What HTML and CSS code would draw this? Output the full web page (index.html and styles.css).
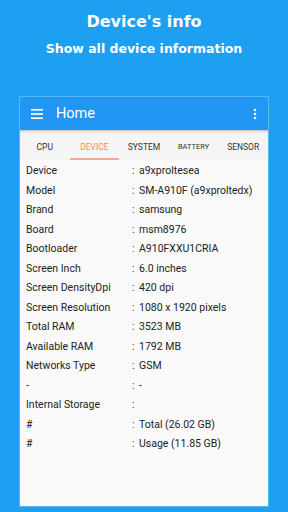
FILE: index.html
```html
<!DOCTYPE html>
<html lang="en">
<head>
    <meta charset="UTF-8">
    <title>Device's info</title>
    <link rel="stylesheet" href="styles.css">
</head>
<body>
    <div class="intro">
        <h1>Device's info</h1>
        <p>Show all device information</p>
    </div>

    <div class="phone">
        <div class="toolbar">
            <svg class="menu-icon" width="14" height="12" viewBox="0 0 14 12">
                <rect x="1" y="1" width="12" height="1.6" fill="#fff"/>
                <rect x="1" y="5.2" width="12" height="1.6" fill="#fff"/>
                <rect x="1" y="9.4" width="12" height="1.6" fill="#fff"/>
            </svg>
            <span class="toolbar-title">Home</span>
            <svg class="more-icon" width="4" height="12" viewBox="0 0 4 12">
                <circle cx="2" cy="2" r="1.3" fill="#fff"/>
                <circle cx="2" cy="6" r="1.3" fill="#fff"/>
                <circle cx="2" cy="10" r="1.3" fill="#fff"/>
            </svg>
        </div>

        <div class="tabs">
            <div class="tab">CPU</div>
            <div class="tab active">DEVICE</div>
            <div class="tab">SYSTEM</div>
            <div class="tab small">BATTERY</div>
            <div class="tab">SENSOR</div>
        </div>

        <div class="info">
            <div class="row"><span class="label">Device</span><span class="colon">:</span><span class="value">a9xproltesea</span></div>
            <div class="row"><span class="label">Model</span><span class="colon">:</span><span class="value">SM-A910F (a9xproltedx)</span></div>
            <div class="row"><span class="label">Brand</span><span class="colon">:</span><span class="value">samsung</span></div>
            <div class="row"><span class="label">Board</span><span class="colon">:</span><span class="value">msm8976</span></div>
            <div class="row"><span class="label">Bootloader</span><span class="colon">:</span><span class="value">A910FXXU1CRIA</span></div>
            <div class="row"><span class="label">Screen Inch</span><span class="colon">:</span><span class="value">6.0 inches</span></div>
            <div class="row"><span class="label">Screen DensityDpi</span><span class="colon">:</span><span class="value">420 dpi</span></div>
            <div class="row"><span class="label">Screen Resolution</span><span class="colon">:</span><span class="value">1080 x 1920 pixels</span></div>
            <div class="row"><span class="label">Total RAM</span><span class="colon">:</span><span class="value">3523 MB</span></div>
            <div class="row"><span class="label">Available RAM</span><span class="colon">:</span><span class="value">1792 MB</span></div>
            <div class="row"><span class="label">Networks Type</span><span class="colon">:</span><span class="value">GSM</span></div>
            <div class="row"><span class="label">-</span><span class="colon">:</span><span class="value">-</span></div>
            <div class="row"><span class="label">Internal Storage</span><span class="colon">:</span><span class="value"></span></div>
            <div class="row"><span class="label">#</span><span class="colon">:</span><span class="value">Total (26.02 GB)</span></div>
            <div class="row"><span class="label">#</span><span class="colon">:</span><span class="value">Usage (11.85 GB)</span></div>
        </div>
    </div>
</body>
</html>
```

FILE: styles.css
```css
html, body {
    height: 100%;
}

body {
    margin: 0;
    background-color: #1da0f1;
    font-family: 'DejaVu Sans', sans-serif;
    color: #fff;
    overflow: hidden;
}

.intro {
    text-align: center;
    padding-top: 11px;
}

.intro h1 {
    margin: 0;
    font-size: 16px;
    font-weight: bold;
    line-height: 22px;
}

.intro p {
    margin: 7px 0 0;
    font-size: 12.5px;
    font-weight: bold;
    line-height: 18px;
}

.phone {
    margin: 39px 20px 0;
    height: 409px;
    background-color: #fafafa;
    box-shadow: 0 0 0 1px rgba(255, 255, 255, 0.25);
    display: flex;
    flex-direction: column;
}

.toolbar {
    height: 33px;
    background-color: #2196f3;
    display: flex;
    align-items: center;
    padding: 0 11px 0 10px;
}

.menu-icon {
    flex: none;
}

.toolbar-title {
    flex: 1;
    margin-left: 12px;
    font-family: Roboto, sans-serif;
    font-size: 14.5px;
    color: #fff;
}

.tabs {
    display: flex;
    height: 30px;
    background-color: #f5f5f5;
    box-shadow: inset 0 3px 3px -2px rgba(0, 0, 0, 0.25);
}

.tab {
    flex: 1;
    text-align: center;
    font-family: Roboto, sans-serif;
    font-size: 8.5px;
    line-height: 28px;
    padding-top: 3px;
    color: #333;
    border-bottom: 2px solid transparent;
    box-sizing: border-box;
}

.tab.small {
    font-size: 7.5px;
}

.tab.active {
    color: #f58a5c;
    border-bottom-color: #f6ab8c;
}

.info {
    padding: 1px 0 0 6px;
    font-family: Roboto, sans-serif;
    font-size: 10.5px;
    color: #222;
}

.row {
    display: flex;
    height: 19.5px;
    align-items: center;
}

.label {
    width: 106px;
    flex: none;
}

.colon {
    width: 7px;
    flex: none;
    color: #444;
}
```
